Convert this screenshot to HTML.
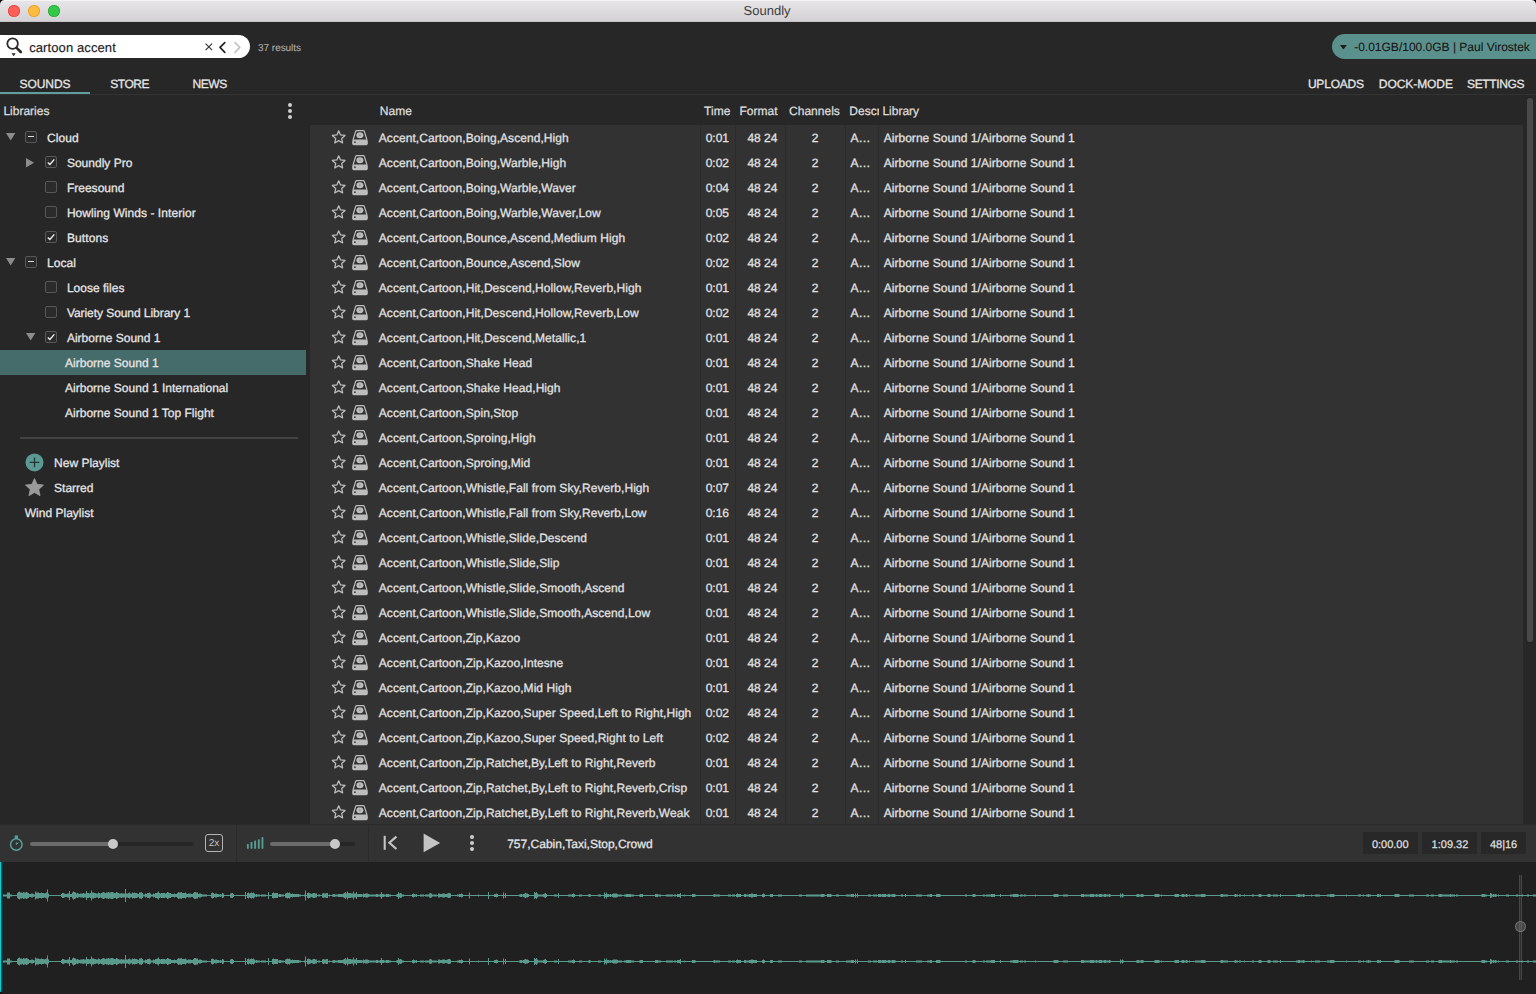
<!DOCTYPE html>
<html><head><meta charset="utf-8"><title>Soundly</title>
<style>
html,body{margin:0;padding:0}
body{width:1536px;height:994px;overflow:hidden;position:relative;background:#272727;font-family:"Liberation Sans", sans-serif;font-size:12px;color:#e2e2e2}
.t{position:absolute;white-space:nowrap;line-height:20px;height:20px;text-rendering:geometricPrecision;-webkit-text-stroke:0.28px currentColor}
.a{position:absolute}
.cb{position:absolute;width:10px;height:10px;border:1px solid #585858;border-radius:2px;background:#2b2b2b}
svg{position:absolute;overflow:visible}
</style></head><body>

<div class="a" style="left:0;top:0;width:1536px;height:22px;background:linear-gradient(#e9e7e9 0,#e6e4e6 2px,#d3d1d3 21px,#b8b6b8 22px);"></div>
<div class="a" style="left:0;top:0;width:1536px;height:1px;background:#f4f3f4"></div>
<div class="a" style="left:8px;top:5px;width:12px;height:12px;border-radius:50%;background:#fc5f57;box-shadow:inset 0 0 0 0.8px #e2463f"></div>
<div class="a" style="left:28px;top:5px;width:12px;height:12px;border-radius:50%;background:#fdbc40;box-shadow:inset 0 0 0 0.8px #e0a028"></div>
<div class="a" style="left:48px;top:5px;width:12px;height:12px;border-radius:50%;background:#34c84a;box-shadow:inset 0 0 0 0.8px #27aa35"></div>
<div class="t" style="left:743.6px;top:1.10px;font-size:13px;color:#3c3c3c;-webkit-text-stroke:0">Soundly</div>
<div class="a" style="left:-12px;top:35px;width:262px;height:23px;border-radius:11.5px;background:#fff"></div>
<svg style="left:0;top:35px" width="30" height="23" viewBox="0 35 30 23">
<circle cx="12.6" cy="43.6" r="5.3" fill="none" stroke="#2a2a2a" stroke-width="1.8"/>
<path d="M16.6 47.8 L20.8 52" stroke="#2a2a2a" stroke-width="2.6" stroke-linecap="round"/>
<path d="M11.5 53.2 h4.2 l-2.1 3z" fill="#2a2a2a"/></svg>
<div class="t" style="left:29.2px;top:38.30px;font-size:13px;color:#1c1c1c;letter-spacing:0.1px;-webkit-text-stroke:0.15px">cartoon accent</div>
<svg style="left:200px;top:35px" width="50" height="23" viewBox="200 35 50 23">
<path d="M205.6 43.7 l6.5 6.5 M212.1 43.7 l-6.5 6.5" stroke="#333" stroke-width="1.1" fill="none"/>
<path d="M224.8 42.6 L220 47.4 L224.8 52.4" stroke="#222" stroke-width="1.7" fill="none" stroke-linecap="round" stroke-linejoin="round"/>
<path d="M235 42.6 L239.8 47.4 L235 52.4" stroke="#c4c4c4" stroke-width="1.7" fill="none" stroke-linecap="round" stroke-linejoin="round"/>
</svg>
<div class="t" style="left:258.1px;top:38.94px;font-size:10px;color:#adadad;letter-spacing:-0.05px;-webkit-text-stroke:0.1px">37 results</div>
<div class="a" style="left:1332px;top:34px;width:230px;height:25px;border-radius:12.5px;background:#5b918d"></div>
<svg style="left:1338px;top:42px" width="12" height="10" viewBox="1338 42 12 10"><path d="M1340 45 h6.8 l-3.4 4.4z" fill="#1c1c1c"/></svg>
<div class="t" style="left:1354.2px;top:36.64px;font-size:12px;color:#161616;-webkit-text-stroke:0.1px">-0.01GB/100.0GB | Paul Virostek</div>
<div class="t" style="left:19.6px;top:73.84px;font-size:12px;color:#e6e6e6;letter-spacing:-0.08px">SOUNDS</div>
<div class="t" style="left:110.2px;top:73.84px;font-size:12px;color:#e6e6e6;letter-spacing:-0.45px">STORE</div>
<div class="t" style="left:192.5px;top:73.84px;font-size:12px;color:#e6e6e6;letter-spacing:-0.4px">NEWS</div>
<div class="t" style="left:1307.9px;top:73.64px;font-size:12px;color:#e6e6e6;letter-spacing:-0.2px">UPLOADS</div>
<div class="t" style="left:1378.8px;top:73.64px;font-size:12px;color:#e6e6e6;letter-spacing:-0.06px">DOCK-MODE</div>
<div class="t" style="left:1467px;top:73.64px;font-size:12px;color:#e6e6e6;letter-spacing:-0.35px">SETTINGS</div>
<div class="a" style="left:0;top:94px;width:1536px;height:1px;background:#333"></div>
<div class="a" style="left:0;top:92px;width:90px;height:2px;background:#5f9fa0"></div>
<div class="t" style="left:3.4px;top:100.54px;font-size:12px;color:#dcdcdc;">Libraries</div>
<div class="a" style="left:288.4px;top:102.6px;width:4px;height:4px;border-radius:50%;background:#cfcfcf"></div>
<div class="a" style="left:288.4px;top:108.5px;width:4px;height:4px;border-radius:50%;background:#cfcfcf"></div>
<div class="a" style="left:288.4px;top:114.5px;width:4px;height:4px;border-radius:50%;background:#cfcfcf"></div>
<div class="t" style="left:379.8px;top:100.54px;font-size:12px;color:#dcdcdc;">Name</div>
<div class="t" style="left:704.1px;top:100.54px;font-size:12px;color:#dcdcdc;">Time</div>
<div class="t" style="left:739.5px;top:100.54px;font-size:12px;color:#dcdcdc;">Format</div>
<div class="t" style="left:789.1px;top:100.54px;font-size:12px;color:#dcdcdc;">Channels</div>
<div class="t" style="left:849.3px;top:100.54px;font-size:12px;color:#dcdcdc;width:29.6px;overflow:hidden">Descr</div>
<div class="t" style="left:882.4px;top:100.54px;font-size:12px;color:#dcdcdc;">Library</div>
<div class="a" style="left:0;top:350px;width:306px;height:25px;background:#466b6b"></div>
<svg style="left:5.7px;top:133.2px" width="10" height="8"><path d="M0 0 h9.4 l-4.7 7.5z" fill="#8c8c8c"/></svg>
<div class="cb" style="left:25px;top:131px"></div>
<div class="a" style="left:27.8px;top:136.4px;width:6.4px;height:1px;background:#dcdcdc"></div>
<div class="t" style="left:47.1px;top:127.54px;font-size:12px;color:#e6e6e6;letter-spacing:0.04px">Cloud</div>
<svg style="left:25.8px;top:157.9px" width="9" height="10"><path d="M0 0 v9.4 l8.1 -4.7z" fill="#8c8c8c"/></svg>
<div class="cb" style="left:45px;top:156px"></div>
<svg style="left:45px;top:156px" width="12" height="12"><path d="M2.8 6.4 L4.9 8.5 L9.3 3.4" stroke="#f0f0f0" stroke-width="1.4" fill="none"/></svg>
<div class="t" style="left:66.9px;top:152.54px;font-size:12px;color:#e6e6e6;letter-spacing:0.015px">Soundly Pro</div>
<div class="cb" style="left:45px;top:181px"></div>
<div class="t" style="left:66.9px;top:177.54px;font-size:12px;color:#e6e6e6;letter-spacing:0.015px">Freesound</div>
<div class="cb" style="left:45px;top:206px"></div>
<div class="t" style="left:66.9px;top:202.54px;font-size:12px;color:#e6e6e6;letter-spacing:0.06px">Howling Winds - Interior</div>
<div class="cb" style="left:45px;top:231px"></div>
<svg style="left:45px;top:231px" width="12" height="12"><path d="M2.8 6.4 L4.9 8.5 L9.3 3.4" stroke="#f0f0f0" stroke-width="1.4" fill="none"/></svg>
<div class="t" style="left:66.9px;top:227.54px;font-size:12px;color:#e6e6e6;letter-spacing:0.12px">Buttons</div>
<svg style="left:5.7px;top:258.2px" width="10" height="8"><path d="M0 0 h9.4 l-4.7 7.5z" fill="#8c8c8c"/></svg>
<div class="cb" style="left:25px;top:256px"></div>
<div class="a" style="left:27.8px;top:261.4px;width:6.4px;height:1px;background:#dcdcdc"></div>
<div class="t" style="left:47.1px;top:252.54px;font-size:12px;color:#e6e6e6;letter-spacing:0.04px">Local</div>
<div class="cb" style="left:45px;top:281px"></div>
<div class="t" style="left:66.9px;top:277.54px;font-size:12px;color:#e6e6e6;letter-spacing:0.015px">Loose files</div>
<div class="cb" style="left:45px;top:306px"></div>
<div class="t" style="left:66.9px;top:302.54px;font-size:12px;color:#e6e6e6;letter-spacing:-0.06px">Variety Sound Library 1</div>
<svg style="left:25.8px;top:333.2px" width="10" height="8"><path d="M0 0 h9.4 l-4.7 7.5z" fill="#8c8c8c"/></svg>
<div class="cb" style="left:45px;top:331px"></div>
<svg style="left:45px;top:331px" width="12" height="12"><path d="M2.8 6.4 L4.9 8.5 L9.3 3.4" stroke="#f0f0f0" stroke-width="1.4" fill="none"/></svg>
<div class="t" style="left:66.9px;top:327.54px;font-size:12px;color:#e6e6e6;letter-spacing:0.015px">Airborne Sound 1</div>
<div class="t" style="left:65px;top:352.54px;font-size:12px;color:#e6e6e6;letter-spacing:0.015px">Airborne Sound 1</div>
<div class="t" style="left:65px;top:377.54px;font-size:12px;color:#e6e6e6;letter-spacing:0.015px">Airborne Sound 1 International</div>
<div class="t" style="left:65px;top:402.54px;font-size:12px;color:#e6e6e6;letter-spacing:0.015px">Airborne Sound 1 Top Flight</div>
<div class="a" style="left:20px;top:437px;width:278px;height:2px;background:#434343"></div>
<svg style="left:25px;top:453px" width="19" height="19"><circle cx="9.5" cy="9.4" r="9" fill="#5b9a94"/><path d="M9.5 4.6 v9.6 M4.7 9.4 h9.6" stroke="#243534" stroke-width="1.3"/></svg>
<div class="t" style="left:54.1px;top:452.54px;font-size:12px;color:#e6e6e6;">New Playlist</div>
<svg style="left:24px;top:477px" width="21" height="21"><path d="M10.50 1.50 L13.15 7.36 L19.54 8.06 L14.78 12.39 L16.08 18.69 L10.50 15.50 L4.92 18.69 L6.22 12.39 L1.46 8.06 L7.85 7.36Z" fill="#9a9a9a" stroke="#9a9a9a" stroke-width="0.8" stroke-linejoin="round"/></svg>
<div class="t" style="left:54.1px;top:477.54px;font-size:12px;color:#e6e6e6;">Starred</div>
<div class="t" style="left:24.8px;top:502.54px;font-size:12px;color:#e6e6e6;">Wind Playlist</div>
<div class="a" style="left:310px;top:125px;width:1213px;height:700px;background:#323232"></div>
<div class="a" style="left:700px;top:125px;width:1px;height:700px;background:#2b2b2b"></div>
<div class="a" style="left:735px;top:125px;width:1px;height:700px;background:#2b2b2b"></div>
<div class="a" style="left:785px;top:125px;width:1px;height:700px;background:#2b2b2b"></div>
<div class="a" style="left:845px;top:125px;width:1px;height:700px;background:#2b2b2b"></div>
<div class="a" style="left:878px;top:125px;width:1px;height:700px;background:#2b2b2b"></div>
<svg width="0" height="0" style="left:0;top:0"><defs><g id="st"><path d="M6.70 0.80 L8.52 4.99 L13.07 5.43 L9.65 8.46 L10.64 12.92 L6.70 10.60 L2.76 12.92 L3.75 8.46 L0.33 5.43 L4.88 4.99Z" fill="none" stroke="#bdbdbd" stroke-width="1.25" stroke-linejoin="round"/></g><g id="dk"><path d="M1 10 L3.6 1.6 Q3.9 0.7 4.8 0.7 H11.2 Q12.1 0.7 12.4 1.6 L15 10" fill="none" stroke="#bdbdbd" stroke-width="1.2"/><rect x="0.2" y="9.4" width="15.6" height="5.8" rx="1.6" fill="#bdbdbd"/><ellipse cx="7.9" cy="5.3" rx="3.5" ry="3" fill="#bdbdbd"/><ellipse cx="7.9" cy="5.2" rx="0.55" ry="0.9" fill="#777"/><circle cx="2.9" cy="12.2" r="0.85" fill="#333"/></g></defs></svg>
<div class="a" style="left:310px;top:125px;width:1213px;height:700px;overflow:hidden">
<svg style="left:22px;top:5px" width="14" height="15"><use href="#st"/></svg>
<svg style="left:41.7px;top:4.6px" width="16" height="16"><use href="#dk"/></svg>
<div class="t" style="left:68.8px;top:2.59px;letter-spacing:0.055px">Accent,Cartoon,Boing,Ascend,High</div>
<div class="t" style="left:395.7px;top:2.59px;letter-spacing:0px">0:01</div>
<div class="t" style="left:437.4px;top:2.59px;letter-spacing:0px">48 24</div>
<div class="t" style="left:501.8px;top:2.59px;letter-spacing:0px">2</div>
<div class="t" style="left:540.6px;top:2.59px;letter-spacing:0px">A&hellip;</div>
<div class="t" style="left:573.7px;top:2.59px;letter-spacing:0.03px">Airborne Sound 1/Airborne Sound 1</div>
<svg style="left:22px;top:30px" width="14" height="15"><use href="#st"/></svg>
<svg style="left:41.7px;top:29.6px" width="16" height="16"><use href="#dk"/></svg>
<div class="t" style="left:68.8px;top:27.59px;letter-spacing:0.055px">Accent,Cartoon,Boing,Warble,High</div>
<div class="t" style="left:395.7px;top:27.59px;letter-spacing:0px">0:02</div>
<div class="t" style="left:437.4px;top:27.59px;letter-spacing:0px">48 24</div>
<div class="t" style="left:501.8px;top:27.59px;letter-spacing:0px">2</div>
<div class="t" style="left:540.6px;top:27.59px;letter-spacing:0px">A&hellip;</div>
<div class="t" style="left:573.7px;top:27.59px;letter-spacing:0.03px">Airborne Sound 1/Airborne Sound 1</div>
<svg style="left:22px;top:55px" width="14" height="15"><use href="#st"/></svg>
<svg style="left:41.7px;top:54.6px" width="16" height="16"><use href="#dk"/></svg>
<div class="t" style="left:68.8px;top:52.59px;letter-spacing:0.055px">Accent,Cartoon,Boing,Warble,Waver</div>
<div class="t" style="left:395.7px;top:52.59px;letter-spacing:0px">0:04</div>
<div class="t" style="left:437.4px;top:52.59px;letter-spacing:0px">48 24</div>
<div class="t" style="left:501.8px;top:52.59px;letter-spacing:0px">2</div>
<div class="t" style="left:540.6px;top:52.59px;letter-spacing:0px">A&hellip;</div>
<div class="t" style="left:573.7px;top:52.59px;letter-spacing:0.03px">Airborne Sound 1/Airborne Sound 1</div>
<svg style="left:22px;top:80px" width="14" height="15"><use href="#st"/></svg>
<svg style="left:41.7px;top:79.6px" width="16" height="16"><use href="#dk"/></svg>
<div class="t" style="left:68.8px;top:77.59px;letter-spacing:0.055px">Accent,Cartoon,Boing,Warble,Waver,Low</div>
<div class="t" style="left:395.7px;top:77.59px;letter-spacing:0px">0:05</div>
<div class="t" style="left:437.4px;top:77.59px;letter-spacing:0px">48 24</div>
<div class="t" style="left:501.8px;top:77.59px;letter-spacing:0px">2</div>
<div class="t" style="left:540.6px;top:77.59px;letter-spacing:0px">A&hellip;</div>
<div class="t" style="left:573.7px;top:77.59px;letter-spacing:0.03px">Airborne Sound 1/Airborne Sound 1</div>
<svg style="left:22px;top:105px" width="14" height="15"><use href="#st"/></svg>
<svg style="left:41.7px;top:104.6px" width="16" height="16"><use href="#dk"/></svg>
<div class="t" style="left:68.8px;top:102.59px;letter-spacing:0.055px">Accent,Cartoon,Bounce,Ascend,Medium High</div>
<div class="t" style="left:395.7px;top:102.59px;letter-spacing:0px">0:02</div>
<div class="t" style="left:437.4px;top:102.59px;letter-spacing:0px">48 24</div>
<div class="t" style="left:501.8px;top:102.59px;letter-spacing:0px">2</div>
<div class="t" style="left:540.6px;top:102.59px;letter-spacing:0px">A&hellip;</div>
<div class="t" style="left:573.7px;top:102.59px;letter-spacing:0.03px">Airborne Sound 1/Airborne Sound 1</div>
<svg style="left:22px;top:130px" width="14" height="15"><use href="#st"/></svg>
<svg style="left:41.7px;top:129.6px" width="16" height="16"><use href="#dk"/></svg>
<div class="t" style="left:68.8px;top:127.59px;letter-spacing:0.055px">Accent,Cartoon,Bounce,Ascend,Slow</div>
<div class="t" style="left:395.7px;top:127.59px;letter-spacing:0px">0:02</div>
<div class="t" style="left:437.4px;top:127.59px;letter-spacing:0px">48 24</div>
<div class="t" style="left:501.8px;top:127.59px;letter-spacing:0px">2</div>
<div class="t" style="left:540.6px;top:127.59px;letter-spacing:0px">A&hellip;</div>
<div class="t" style="left:573.7px;top:127.59px;letter-spacing:0.03px">Airborne Sound 1/Airborne Sound 1</div>
<svg style="left:22px;top:155px" width="14" height="15"><use href="#st"/></svg>
<svg style="left:41.7px;top:154.6px" width="16" height="16"><use href="#dk"/></svg>
<div class="t" style="left:68.8px;top:152.59px;letter-spacing:0.055px">Accent,Cartoon,Hit,Descend,Hollow,Reverb,High</div>
<div class="t" style="left:395.7px;top:152.59px;letter-spacing:0px">0:01</div>
<div class="t" style="left:437.4px;top:152.59px;letter-spacing:0px">48 24</div>
<div class="t" style="left:501.8px;top:152.59px;letter-spacing:0px">2</div>
<div class="t" style="left:540.6px;top:152.59px;letter-spacing:0px">A&hellip;</div>
<div class="t" style="left:573.7px;top:152.59px;letter-spacing:0.03px">Airborne Sound 1/Airborne Sound 1</div>
<svg style="left:22px;top:180px" width="14" height="15"><use href="#st"/></svg>
<svg style="left:41.7px;top:179.6px" width="16" height="16"><use href="#dk"/></svg>
<div class="t" style="left:68.8px;top:177.59px;letter-spacing:0.055px">Accent,Cartoon,Hit,Descend,Hollow,Reverb,Low</div>
<div class="t" style="left:395.7px;top:177.59px;letter-spacing:0px">0:02</div>
<div class="t" style="left:437.4px;top:177.59px;letter-spacing:0px">48 24</div>
<div class="t" style="left:501.8px;top:177.59px;letter-spacing:0px">2</div>
<div class="t" style="left:540.6px;top:177.59px;letter-spacing:0px">A&hellip;</div>
<div class="t" style="left:573.7px;top:177.59px;letter-spacing:0.03px">Airborne Sound 1/Airborne Sound 1</div>
<svg style="left:22px;top:205px" width="14" height="15"><use href="#st"/></svg>
<svg style="left:41.7px;top:204.6px" width="16" height="16"><use href="#dk"/></svg>
<div class="t" style="left:68.8px;top:202.59px;letter-spacing:0.055px">Accent,Cartoon,Hit,Descend,Metallic,1</div>
<div class="t" style="left:395.7px;top:202.59px;letter-spacing:0px">0:01</div>
<div class="t" style="left:437.4px;top:202.59px;letter-spacing:0px">48 24</div>
<div class="t" style="left:501.8px;top:202.59px;letter-spacing:0px">2</div>
<div class="t" style="left:540.6px;top:202.59px;letter-spacing:0px">A&hellip;</div>
<div class="t" style="left:573.7px;top:202.59px;letter-spacing:0.03px">Airborne Sound 1/Airborne Sound 1</div>
<svg style="left:22px;top:230px" width="14" height="15"><use href="#st"/></svg>
<svg style="left:41.7px;top:229.6px" width="16" height="16"><use href="#dk"/></svg>
<div class="t" style="left:68.8px;top:227.59px;letter-spacing:0.055px">Accent,Cartoon,Shake Head</div>
<div class="t" style="left:395.7px;top:227.59px;letter-spacing:0px">0:01</div>
<div class="t" style="left:437.4px;top:227.59px;letter-spacing:0px">48 24</div>
<div class="t" style="left:501.8px;top:227.59px;letter-spacing:0px">2</div>
<div class="t" style="left:540.6px;top:227.59px;letter-spacing:0px">A&hellip;</div>
<div class="t" style="left:573.7px;top:227.59px;letter-spacing:0.03px">Airborne Sound 1/Airborne Sound 1</div>
<svg style="left:22px;top:255px" width="14" height="15"><use href="#st"/></svg>
<svg style="left:41.7px;top:254.6px" width="16" height="16"><use href="#dk"/></svg>
<div class="t" style="left:68.8px;top:252.59px;letter-spacing:0.055px">Accent,Cartoon,Shake Head,High</div>
<div class="t" style="left:395.7px;top:252.59px;letter-spacing:0px">0:01</div>
<div class="t" style="left:437.4px;top:252.59px;letter-spacing:0px">48 24</div>
<div class="t" style="left:501.8px;top:252.59px;letter-spacing:0px">2</div>
<div class="t" style="left:540.6px;top:252.59px;letter-spacing:0px">A&hellip;</div>
<div class="t" style="left:573.7px;top:252.59px;letter-spacing:0.03px">Airborne Sound 1/Airborne Sound 1</div>
<svg style="left:22px;top:280px" width="14" height="15"><use href="#st"/></svg>
<svg style="left:41.7px;top:279.6px" width="16" height="16"><use href="#dk"/></svg>
<div class="t" style="left:68.8px;top:277.59px;letter-spacing:0.055px">Accent,Cartoon,Spin,Stop</div>
<div class="t" style="left:395.7px;top:277.59px;letter-spacing:0px">0:01</div>
<div class="t" style="left:437.4px;top:277.59px;letter-spacing:0px">48 24</div>
<div class="t" style="left:501.8px;top:277.59px;letter-spacing:0px">2</div>
<div class="t" style="left:540.6px;top:277.59px;letter-spacing:0px">A&hellip;</div>
<div class="t" style="left:573.7px;top:277.59px;letter-spacing:0.03px">Airborne Sound 1/Airborne Sound 1</div>
<svg style="left:22px;top:305px" width="14" height="15"><use href="#st"/></svg>
<svg style="left:41.7px;top:304.6px" width="16" height="16"><use href="#dk"/></svg>
<div class="t" style="left:68.8px;top:302.59px;letter-spacing:0.055px">Accent,Cartoon,Sproing,High</div>
<div class="t" style="left:395.7px;top:302.59px;letter-spacing:0px">0:01</div>
<div class="t" style="left:437.4px;top:302.59px;letter-spacing:0px">48 24</div>
<div class="t" style="left:501.8px;top:302.59px;letter-spacing:0px">2</div>
<div class="t" style="left:540.6px;top:302.59px;letter-spacing:0px">A&hellip;</div>
<div class="t" style="left:573.7px;top:302.59px;letter-spacing:0.03px">Airborne Sound 1/Airborne Sound 1</div>
<svg style="left:22px;top:330px" width="14" height="15"><use href="#st"/></svg>
<svg style="left:41.7px;top:329.6px" width="16" height="16"><use href="#dk"/></svg>
<div class="t" style="left:68.8px;top:327.59px;letter-spacing:0.055px">Accent,Cartoon,Sproing,Mid</div>
<div class="t" style="left:395.7px;top:327.59px;letter-spacing:0px">0:01</div>
<div class="t" style="left:437.4px;top:327.59px;letter-spacing:0px">48 24</div>
<div class="t" style="left:501.8px;top:327.59px;letter-spacing:0px">2</div>
<div class="t" style="left:540.6px;top:327.59px;letter-spacing:0px">A&hellip;</div>
<div class="t" style="left:573.7px;top:327.59px;letter-spacing:0.03px">Airborne Sound 1/Airborne Sound 1</div>
<svg style="left:22px;top:355px" width="14" height="15"><use href="#st"/></svg>
<svg style="left:41.7px;top:354.6px" width="16" height="16"><use href="#dk"/></svg>
<div class="t" style="left:68.8px;top:352.59px;letter-spacing:0.055px">Accent,Cartoon,Whistle,Fall from Sky,Reverb,High</div>
<div class="t" style="left:395.7px;top:352.59px;letter-spacing:0px">0:07</div>
<div class="t" style="left:437.4px;top:352.59px;letter-spacing:0px">48 24</div>
<div class="t" style="left:501.8px;top:352.59px;letter-spacing:0px">2</div>
<div class="t" style="left:540.6px;top:352.59px;letter-spacing:0px">A&hellip;</div>
<div class="t" style="left:573.7px;top:352.59px;letter-spacing:0.03px">Airborne Sound 1/Airborne Sound 1</div>
<svg style="left:22px;top:380px" width="14" height="15"><use href="#st"/></svg>
<svg style="left:41.7px;top:379.6px" width="16" height="16"><use href="#dk"/></svg>
<div class="t" style="left:68.8px;top:377.59px;letter-spacing:0.055px">Accent,Cartoon,Whistle,Fall from Sky,Reverb,Low</div>
<div class="t" style="left:395.7px;top:377.59px;letter-spacing:0px">0:16</div>
<div class="t" style="left:437.4px;top:377.59px;letter-spacing:0px">48 24</div>
<div class="t" style="left:501.8px;top:377.59px;letter-spacing:0px">2</div>
<div class="t" style="left:540.6px;top:377.59px;letter-spacing:0px">A&hellip;</div>
<div class="t" style="left:573.7px;top:377.59px;letter-spacing:0.03px">Airborne Sound 1/Airborne Sound 1</div>
<svg style="left:22px;top:405px" width="14" height="15"><use href="#st"/></svg>
<svg style="left:41.7px;top:404.6px" width="16" height="16"><use href="#dk"/></svg>
<div class="t" style="left:68.8px;top:402.59px;letter-spacing:0.055px">Accent,Cartoon,Whistle,Slide,Descend</div>
<div class="t" style="left:395.7px;top:402.59px;letter-spacing:0px">0:01</div>
<div class="t" style="left:437.4px;top:402.59px;letter-spacing:0px">48 24</div>
<div class="t" style="left:501.8px;top:402.59px;letter-spacing:0px">2</div>
<div class="t" style="left:540.6px;top:402.59px;letter-spacing:0px">A&hellip;</div>
<div class="t" style="left:573.7px;top:402.59px;letter-spacing:0.03px">Airborne Sound 1/Airborne Sound 1</div>
<svg style="left:22px;top:430px" width="14" height="15"><use href="#st"/></svg>
<svg style="left:41.7px;top:429.6px" width="16" height="16"><use href="#dk"/></svg>
<div class="t" style="left:68.8px;top:427.59px;letter-spacing:0.055px">Accent,Cartoon,Whistle,Slide,Slip</div>
<div class="t" style="left:395.7px;top:427.59px;letter-spacing:0px">0:01</div>
<div class="t" style="left:437.4px;top:427.59px;letter-spacing:0px">48 24</div>
<div class="t" style="left:501.8px;top:427.59px;letter-spacing:0px">2</div>
<div class="t" style="left:540.6px;top:427.59px;letter-spacing:0px">A&hellip;</div>
<div class="t" style="left:573.7px;top:427.59px;letter-spacing:0.03px">Airborne Sound 1/Airborne Sound 1</div>
<svg style="left:22px;top:455px" width="14" height="15"><use href="#st"/></svg>
<svg style="left:41.7px;top:454.6px" width="16" height="16"><use href="#dk"/></svg>
<div class="t" style="left:68.8px;top:452.59px;letter-spacing:0.055px">Accent,Cartoon,Whistle,Slide,Smooth,Ascend</div>
<div class="t" style="left:395.7px;top:452.59px;letter-spacing:0px">0:01</div>
<div class="t" style="left:437.4px;top:452.59px;letter-spacing:0px">48 24</div>
<div class="t" style="left:501.8px;top:452.59px;letter-spacing:0px">2</div>
<div class="t" style="left:540.6px;top:452.59px;letter-spacing:0px">A&hellip;</div>
<div class="t" style="left:573.7px;top:452.59px;letter-spacing:0.03px">Airborne Sound 1/Airborne Sound 1</div>
<svg style="left:22px;top:480px" width="14" height="15"><use href="#st"/></svg>
<svg style="left:41.7px;top:479.6px" width="16" height="16"><use href="#dk"/></svg>
<div class="t" style="left:68.8px;top:477.59px;letter-spacing:0.055px">Accent,Cartoon,Whistle,Slide,Smooth,Ascend,Low</div>
<div class="t" style="left:395.7px;top:477.59px;letter-spacing:0px">0:01</div>
<div class="t" style="left:437.4px;top:477.59px;letter-spacing:0px">48 24</div>
<div class="t" style="left:501.8px;top:477.59px;letter-spacing:0px">2</div>
<div class="t" style="left:540.6px;top:477.59px;letter-spacing:0px">A&hellip;</div>
<div class="t" style="left:573.7px;top:477.59px;letter-spacing:0.03px">Airborne Sound 1/Airborne Sound 1</div>
<svg style="left:22px;top:505px" width="14" height="15"><use href="#st"/></svg>
<svg style="left:41.7px;top:504.6px" width="16" height="16"><use href="#dk"/></svg>
<div class="t" style="left:68.8px;top:502.59px;letter-spacing:0.055px">Accent,Cartoon,Zip,Kazoo</div>
<div class="t" style="left:395.7px;top:502.59px;letter-spacing:0px">0:01</div>
<div class="t" style="left:437.4px;top:502.59px;letter-spacing:0px">48 24</div>
<div class="t" style="left:501.8px;top:502.59px;letter-spacing:0px">2</div>
<div class="t" style="left:540.6px;top:502.59px;letter-spacing:0px">A&hellip;</div>
<div class="t" style="left:573.7px;top:502.59px;letter-spacing:0.03px">Airborne Sound 1/Airborne Sound 1</div>
<svg style="left:22px;top:530px" width="14" height="15"><use href="#st"/></svg>
<svg style="left:41.7px;top:529.6px" width="16" height="16"><use href="#dk"/></svg>
<div class="t" style="left:68.8px;top:527.59px;letter-spacing:0.055px">Accent,Cartoon,Zip,Kazoo,Intesne</div>
<div class="t" style="left:395.7px;top:527.59px;letter-spacing:0px">0:01</div>
<div class="t" style="left:437.4px;top:527.59px;letter-spacing:0px">48 24</div>
<div class="t" style="left:501.8px;top:527.59px;letter-spacing:0px">2</div>
<div class="t" style="left:540.6px;top:527.59px;letter-spacing:0px">A&hellip;</div>
<div class="t" style="left:573.7px;top:527.59px;letter-spacing:0.03px">Airborne Sound 1/Airborne Sound 1</div>
<svg style="left:22px;top:555px" width="14" height="15"><use href="#st"/></svg>
<svg style="left:41.7px;top:554.6px" width="16" height="16"><use href="#dk"/></svg>
<div class="t" style="left:68.8px;top:552.59px;letter-spacing:0.055px">Accent,Cartoon,Zip,Kazoo,Mid High</div>
<div class="t" style="left:395.7px;top:552.59px;letter-spacing:0px">0:01</div>
<div class="t" style="left:437.4px;top:552.59px;letter-spacing:0px">48 24</div>
<div class="t" style="left:501.8px;top:552.59px;letter-spacing:0px">2</div>
<div class="t" style="left:540.6px;top:552.59px;letter-spacing:0px">A&hellip;</div>
<div class="t" style="left:573.7px;top:552.59px;letter-spacing:0.03px">Airborne Sound 1/Airborne Sound 1</div>
<svg style="left:22px;top:580px" width="14" height="15"><use href="#st"/></svg>
<svg style="left:41.7px;top:579.6px" width="16" height="16"><use href="#dk"/></svg>
<div class="t" style="left:68.8px;top:577.59px;letter-spacing:0.055px">Accent,Cartoon,Zip,Kazoo,Super Speed,Left to Right,High</div>
<div class="t" style="left:395.7px;top:577.59px;letter-spacing:0px">0:02</div>
<div class="t" style="left:437.4px;top:577.59px;letter-spacing:0px">48 24</div>
<div class="t" style="left:501.8px;top:577.59px;letter-spacing:0px">2</div>
<div class="t" style="left:540.6px;top:577.59px;letter-spacing:0px">A&hellip;</div>
<div class="t" style="left:573.7px;top:577.59px;letter-spacing:0.03px">Airborne Sound 1/Airborne Sound 1</div>
<svg style="left:22px;top:605px" width="14" height="15"><use href="#st"/></svg>
<svg style="left:41.7px;top:604.6px" width="16" height="16"><use href="#dk"/></svg>
<div class="t" style="left:68.8px;top:602.59px;letter-spacing:0.055px">Accent,Cartoon,Zip,Kazoo,Super Speed,Right to Left</div>
<div class="t" style="left:395.7px;top:602.59px;letter-spacing:0px">0:02</div>
<div class="t" style="left:437.4px;top:602.59px;letter-spacing:0px">48 24</div>
<div class="t" style="left:501.8px;top:602.59px;letter-spacing:0px">2</div>
<div class="t" style="left:540.6px;top:602.59px;letter-spacing:0px">A&hellip;</div>
<div class="t" style="left:573.7px;top:602.59px;letter-spacing:0.03px">Airborne Sound 1/Airborne Sound 1</div>
<svg style="left:22px;top:630px" width="14" height="15"><use href="#st"/></svg>
<svg style="left:41.7px;top:629.6px" width="16" height="16"><use href="#dk"/></svg>
<div class="t" style="left:68.8px;top:627.59px;letter-spacing:0.055px">Accent,Cartoon,Zip,Ratchet,By,Left to Right,Reverb</div>
<div class="t" style="left:395.7px;top:627.59px;letter-spacing:0px">0:01</div>
<div class="t" style="left:437.4px;top:627.59px;letter-spacing:0px">48 24</div>
<div class="t" style="left:501.8px;top:627.59px;letter-spacing:0px">2</div>
<div class="t" style="left:540.6px;top:627.59px;letter-spacing:0px">A&hellip;</div>
<div class="t" style="left:573.7px;top:627.59px;letter-spacing:0.03px">Airborne Sound 1/Airborne Sound 1</div>
<svg style="left:22px;top:655px" width="14" height="15"><use href="#st"/></svg>
<svg style="left:41.7px;top:654.6px" width="16" height="16"><use href="#dk"/></svg>
<div class="t" style="left:68.8px;top:652.59px;letter-spacing:0.055px">Accent,Cartoon,Zip,Ratchet,By,Left to Right,Reverb,Crisp</div>
<div class="t" style="left:395.7px;top:652.59px;letter-spacing:0px">0:01</div>
<div class="t" style="left:437.4px;top:652.59px;letter-spacing:0px">48 24</div>
<div class="t" style="left:501.8px;top:652.59px;letter-spacing:0px">2</div>
<div class="t" style="left:540.6px;top:652.59px;letter-spacing:0px">A&hellip;</div>
<div class="t" style="left:573.7px;top:652.59px;letter-spacing:0.03px">Airborne Sound 1/Airborne Sound 1</div>
<svg style="left:22px;top:680px" width="14" height="15"><use href="#st"/></svg>
<svg style="left:41.7px;top:679.6px" width="16" height="16"><use href="#dk"/></svg>
<div class="t" style="left:68.8px;top:677.59px;letter-spacing:0.055px">Accent,Cartoon,Zip,Ratchet,By,Left to Right,Reverb,Weak</div>
<div class="t" style="left:395.7px;top:677.59px;letter-spacing:0px">0:01</div>
<div class="t" style="left:437.4px;top:677.59px;letter-spacing:0px">48 24</div>
<div class="t" style="left:501.8px;top:677.59px;letter-spacing:0px">2</div>
<div class="t" style="left:540.6px;top:677.59px;letter-spacing:0px">A&hellip;</div>
<div class="t" style="left:573.7px;top:677.59px;letter-spacing:0.03px">Airborne Sound 1/Airborne Sound 1</div>
</div>
<div class="a" style="left:1527px;top:98px;width:6px;height:544px;border-radius:3px;background:#4a4a4a"></div>
<div class="a" style="left:0;top:824px;width:1536px;height:1px;background:#2a2a2a"></div>
<div class="a" style="left:0;top:825px;width:1536px;height:37px;background:#323232"></div>
<div class="a" style="left:235.5px;top:825px;width:1px;height:37px;background:#2b2b2b"></div>
<div class="a" style="left:368px;top:825px;width:1px;height:37px;background:#2b2b2b"></div>
<svg style="left:8px;top:834px" width="18" height="18"><circle cx="8.3" cy="10.5" r="5.75" fill="none" stroke="#55a398" stroke-width="1.5"/><rect x="6.7" y="1.5" width="3.3" height="3.2" fill="#55a398"/><path d="M8.3 8.2 V10.6 L10.6 8.6" stroke="#55a398" stroke-width="1" fill="none"/></svg>
<div class="a" style="left:30.2px;top:841.9px;width:164.3px;height:4px;border-radius:2px;background:#262626"></div>
<div class="a" style="left:30.2px;top:841.9px;width:82.6px;height:4px;border-radius:2px;background:#6c6c6c"></div>
<div class="a" style="left:107.8px;top:838.9px;width:10px;height:10px;border-radius:50%;background:#c9c9c9"></div>
<div class="a" style="left:205px;top:834px;width:16px;height:16px;border:1px solid #b5b5b5;border-radius:3px"></div>
<div class="t" style="left:208.7px;top:833.83px;font-size:10px;color:#c4c4c4;-webkit-text-stroke:0">2x</div>
<svg style="left:0;top:0" width="1" height="1"><rect x="246.90" y="844.00" width="1.9" height="4.8" rx="0.6" fill="#579c92"/><rect x="250.55" y="842.00" width="1.9" height="6.8" rx="0.6" fill="#579c92"/><rect x="254.20" y="840.50" width="1.9" height="8.3" rx="0.6" fill="#579c92"/><rect x="257.85" y="839.20" width="1.9" height="9.6" rx="0.6" fill="#579c92"/><rect x="261.50" y="837.10" width="1.9" height="11.7" rx="0.6" fill="#579c92"/></svg>
<div class="a" style="left:270.2px;top:841.9px;width:84.5px;height:4px;border-radius:2px;background:#262626"></div>
<div class="a" style="left:270.2px;top:841.9px;width:64.80000000000001px;height:4px;border-radius:2px;background:#6c6c6c"></div>
<div class="a" style="left:330px;top:838.9px;width:10px;height:10px;border-radius:50%;background:#c9c9c9"></div>
<svg style="left:0;top:0" width="1" height="1"><path d="M384.7 835.8 v14" stroke="#c4c4c4" stroke-width="2.1"/><path d="M396.4 836.6 L389.4 842.8 L396.4 849" stroke="#c4c4c4" stroke-width="2.2" fill="none"/><path d="M423.6 833.6 V852.2 L440.2 842.9Z" fill="#c4c4c4"/></svg>
<div class="a" style="left:470px;top:834.6px;width:4px;height:4px;border-radius:50%;background:#cfcfcf"></div>
<div class="a" style="left:470px;top:840.8px;width:4px;height:4px;border-radius:50%;background:#cfcfcf"></div>
<div class="a" style="left:470px;top:847px;width:4px;height:4px;border-radius:50%;background:#cfcfcf"></div>
<div class="t" style="left:507.2px;top:833.84px;font-size:12px;color:#e6e6e6;">757,Cabin,Taxi,Stop,Crowd</div>
<div class="a" style="left:1363px;top:832px;width:55px;height:22px;background:#282828"></div>
<div class="t" style="left:1371.9px;top:834.69px;font-size:11px;color:#dedede;">0:00.00</div>
<div class="a" style="left:1422px;top:832px;width:55px;height:22px;background:#282828"></div>
<div class="t" style="left:1431.6px;top:834.69px;font-size:11px;color:#dedede;">1:09.32</div>
<div class="a" style="left:1481px;top:832px;width:45px;height:22px;background:#282828"></div>
<div class="t" style="left:1489.9px;top:834.69px;font-size:11px;color:#dedede;">48|16</div>
<div class="a" style="left:0;top:862px;width:1536px;height:132px;background:#202020"></div>
<div class="a" style="left:0;top:862px;width:3px;height:130px;background:linear-gradient(to right,#00d6d6 0,#00d6d6 1.25px,#04454f 1.45px,#0b2c34 3px)"></div>
<svg style="left:0;top:0" width="1536" height="994" viewBox="0 0 1536 994"><path id="wv" d="M3 895.5H3V894.5H7V892.5H10V894.5H12V895.08H17V893H18V892H19V891.5H20V892.5H22V893H23V892H24V892.5H26V892H27V892.5H28V893H29V894H31V893.5H33V894H34V894.5H35V891.5H36V892.5H39V893H41V892.5H42V893H44V893.5H45V893H46V892.5H47V889.5H48V893.5H49V895.08H61V894H62V893H64V893.5H65V894H67V893.5H69V891H70V894H72V892.5H73V891.5H74V892H75V892.5H76V893.5H77V893H78V893.5H79V894H80V893.5H83V893H84V893.5H86V891H87V893H89V893.5H90V893H91V890.5H92V892.5H94V893H96V893.5H98V892.5H99V893H100V893.5H101V893H102V892.5H103V892H104V892.5H105V893H106V892.5H108V892H109V892.5H111V892H113V892.5H114V893H116V892H117V892.5H118V893H119V893.5H121V893H122V893.5H125V889H126V893.5H128V893H129V892.5H130V893.5H132V892.5H133V893H134V892.5H135V893H137V893.5H138V894H139V892.5H141V892H142V893H143V894.5H145V893.5H146V894H147V893H149V892.5H150V893.5H151V894.5H153V893.5H154V894H155V893H157V892.5H158V891.5H159V893H160V893.5H161V893H165V893.5H166V893H167V892H168V892.5H169V893H171V894H174V893.5H175V894H177V893H178V892H179V892.5H181V892H182V893H185V892.5H186V893.5H187V894H188V893.5H191V894H193V893H194V892H196V892.5H198V894H199V893.5H201V894H202V894.5H207V895.08H211V893H212V892.5H213V893H214V894H215V893.5H217V894H219V894.5H220V894H221V894.5H222V893H223V893.5H224V895.08H230V893.5H231V893H233V894H234V895.08H245V892H246V895.08H247V893H248V892.5H249V893.5H250V893H251V892.5H252V893H253V892.5H254V893.5H255V894.5H256V894H257V894.5H260V895.08H261V894.5H266V895.08H268V892H269V895.08H272V893H273V892.5H274V893H278V894.5H279V894H281V894.5H284V895.08H285V893.5H286V893H287V892.5H288V893H289V892.5H290V893.5H291V894H292V893.5H293V894H299V894.5H301V895.08H304V894.5H305V890.5H306V895.08H307V893H308V892.5H309V893H310V893.5H311V894H312V893.5H313V893H315V893.5H317V895.08H318V894.5H320V895.08H322V893.5H323V893H324V893.5H326V893H328V895.08H329V894.5H330V895.08H332V894.5H333V894H335V894.5H338V894H343V893.5H344V893H345V892H346V893.5H347V891.5H348V893H351V893.5H353V891.5H354V893.5H356V892H357V894H362V894.5H363V893.5H364V894H365V893.5H368V894H369V894.5H376V894H378V894.5H380V894H381V892H382V894H384V894.5H386V894H389V894.5H391V895.08H396V894.5H397V894H398V892H399V893.5H400V893H401V893.5H402V894.5H404V895.08H412V894H413V893.5H414V894H415V894.5H416V894H417V895.08H420V894.5H424V895.08H425V894.5H429V893.5H430V893H431V893.5H432V894.5H437V895.08H438V893.5H440V894H442V893.5H445V894H447V893.5H448V893H450V893.5H451V895.08H457V894.5H459V894H461V893.5H462V894H463V895.08H469V892.5H470V895.08H478V894.5H479V895.08H488V892H489V895.08H494V894H496V893.5H497V894H498V895.08H503V892.5H504V895.08H505V893H506V895.08H519V894.5H520V894H522V894.5H523V894H524V893.5H525V893H526V893.5H528V894H529V895.08H534V892H535V893H536V892H537V893.5H538V894.5H543V894H544V893.5H545V893H546V894H547V895.08H554V894.5H557V895.08H558V893H559V895.08H568V894.5H572V894H573V893.5H574V894H575V895.08H579V894.5H582V895.08H588V894.5H589V894H590V894.5H591V895.08H598V894.5H601V895.08H604V892.5H605V894H606V892.5H607V894H609V894.5H610V894H611V894.5H612V894H613V893.5H617V894H618V894.5H622V895.08H624V894.5H626V894H631V894.5H634V895.08H639V894.5H640V894H643V895.08H655V894H658V894.5H661V895.08H666V894.5H673V895.08H674V894.5H676V895.08H677V894H680V893H681V895.08H684V894.5H685V895.08H692V894H695V894.5H696V895.08H713V894.5H714V894H715V894.5H720V895.08H728V894.5H731V895.08H732V894.5H735V895.08H736V894H737V893.5H738V894H741V895.08H744V894H746V894.5H749V894H751V893.5H753V894H757V895.08H762V894H763V893.5H764V894H765V895.08H770V894H773V895.08H778V894.5H782V895.08H799V894.5H802V895.08H806V894.5H821V894H824V894.5H825V895.08H827V894H831V894.5H832V895.08H836V894.5H839V895.08H846V894.5H851V894H854V895.08H855V893.5H856V895.08H857V893.5H858V895.08H868V894.5H871V895.08H873V894.5H877V895.08H878V894H881V894.5H882V894H886V894.5H888V894H890V894.5H892V894H895V894.5H896V895.08H901V894.5H903V895.08H905V894H906V895.08H916V894.5H922V895.08H927V894.5H930V894H932V895.08H936V894H940V894.5H941V895.08H965V894.5H967V895.08H972V894.5H973V894H975V894.5H976V895.08H983V894.5H985V895.08H986V894.5H991V894H995V895.08H1000V894H1001V895.08H1010V894.5H1013V894H1018V894.5H1019V895.08H1020V894.5H1023V895.08H1024V894.5H1026V895.08H1035V894.5H1036V895.08H1053V894.5H1054V894H1058V894.5H1059V895.08H1063V894.5H1068V895.08H1081V894H1084V894.5H1090V894H1094V894.5H1096V894H1097V894.5H1099V894H1102V894.5H1104V894H1106V894.5H1109V894H1110V894.5H1111V895.08H1120V893.5H1121V894.5H1122V893.5H1123V894.5H1124V895.08H1136V894.5H1137V894H1139V894.5H1141V894H1143V894.5H1144V895.08H1154V894.5H1155V894H1159V894.5H1160V895.08H1161V894.5H1162V895.08H1174V894.5H1175V894H1179V895.08H1181V894.5H1182V894H1184V894.5H1186V894H1187V894.5H1188V895.08H1189V894.5H1190V895.08H1195V894.5H1201V894H1205V894.5H1206V895.08H1220V894.5H1221V894H1223V894.5H1228V895.08H1234V894.5H1235V894H1236V894.5H1238V895.08H1239V894.5H1241V895.08H1244V894.5H1245V895.08H1252V894.5H1254V895.08H1258V894.5H1259V894H1261V894.5H1262V895.08H1267V894.5H1268V894H1270V894.5H1271V895.08H1273V894.5H1278V895.08H1280V894H1281V895.08H1296V894.5H1298V894H1300V894.5H1303V894H1304V894.5H1305V895.08H1311V894.5H1312V895.08H1315V894.5H1320V895.08H1327V894.5H1330V894H1334V894.5H1335V895.08H1346V894.5H1347V895.08H1358V894.5H1361V895.08H1363V894.5H1364V895.08H1366V894.5H1368V894H1369V894.5H1371V895.08H1377V894H1379V894.5H1380V894H1381V895.08H1394V894.5H1395V894H1399V894.5H1400V895.08H1409V894.5H1414V895.08H1426V894.5H1429V895.08H1431V894.5H1434V895.08H1438V894.5H1439V894H1442V894.5H1450V894H1451V894.5H1455V895.08H1456V894.5H1458V895.08H1481V894.5H1482V894H1485V894.5H1487V895.08H1490V893H1491V893.5H1492V894.5H1493V894H1494V894.5H1495V894H1496V894.5H1497V895.08H1498V894.5H1499V895.08H1506V894.5H1509V895.08H1516V894.5H1518V895.08H1522V894.5H1523V895.08H1527V894.5H1529V895.08H1533V894.5H1536H1536V896.5H1533V895.92H1529V896.5H1527V895.92H1523V896.5H1522V895.92H1518V896.5H1516V895.92H1509V896.5H1506V895.92H1499V896.5H1498V895.92H1497V896.5H1496V897H1495V896.5H1494V897H1493V896.5H1492V897.5H1491V898H1490V895.92H1487V896.5H1485V897H1482V896.5H1481V895.92H1458V896.5H1456V895.92H1455V896.5H1451V897H1450V896.5H1442V897H1439V896.5H1438V895.92H1434V896.5H1431V895.92H1429V896.5H1426V895.92H1414V896.5H1409V895.92H1400V896.5H1399V897H1395V896.5H1394V895.92H1381V897H1380V896.5H1379V897H1377V895.92H1371V896.5H1369V897H1368V896.5H1366V895.92H1364V896.5H1363V895.92H1361V896.5H1358V895.92H1347V896.5H1346V895.92H1335V896.5H1334V897H1330V896.5H1327V895.92H1320V896.5H1315V895.92H1312V896.5H1311V895.92H1305V896.5H1304V897H1303V896.5H1300V897H1298V896.5H1296V895.92H1281V897H1280V895.92H1278V896.5H1273V895.92H1271V896.5H1270V897H1268V896.5H1267V895.92H1262V896.5H1261V897H1259V896.5H1258V895.92H1254V896.5H1252V895.92H1245V896.5H1244V895.92H1241V896.5H1239V895.92H1238V896.5H1236V897H1235V896.5H1234V895.92H1228V896.5H1223V897H1221V896.5H1220V895.92H1206V896.5H1205V897H1201V896.5H1195V895.92H1190V896.5H1189V895.92H1188V896.5H1187V897H1186V896.5H1184V897H1182V896.5H1181V895.92H1179V897H1175V896.5H1174V895.92H1162V896.5H1161V895.92H1160V896.5H1159V897H1155V896.5H1154V895.92H1144V896.5H1143V897H1141V896.5H1139V897H1137V896.5H1136V895.92H1124V896.5H1123V897.5H1122V896.5H1121V897.5H1120V895.92H1111V896.5H1110V897H1109V896.5H1106V897H1104V896.5H1102V897H1099V896.5H1097V897H1096V896.5H1094V897H1090V896.5H1084V897H1081V895.92H1068V896.5H1063V895.92H1059V896.5H1058V897H1054V896.5H1053V895.92H1036V896.5H1035V895.92H1026V896.5H1024V895.92H1023V896.5H1020V895.92H1019V896.5H1018V897H1013V896.5H1010V895.92H1001V897H1000V895.92H995V897H991V896.5H986V895.92H985V896.5H983V895.92H976V896.5H975V897H973V896.5H972V895.92H967V896.5H965V895.92H941V896.5H940V897H936V895.92H932V897H930V896.5H927V895.92H922V896.5H916V895.92H906V897H905V895.92H903V896.5H901V895.92H896V896.5H895V897H892V896.5H890V897H888V896.5H886V897H882V896.5H881V897H878V895.92H877V896.5H873V895.92H871V896.5H868V895.92H858V897.5H857V895.92H856V897.5H855V895.92H854V897H851V896.5H846V895.92H839V896.5H836V895.92H832V896.5H831V897H827V895.92H825V896.5H824V897H821V896.5H806V895.92H802V896.5H799V895.92H782V896.5H778V895.92H773V897H770V895.92H765V897H764V897.5H763V897H762V895.92H757V897H753V897.5H751V897H749V896.5H746V897H744V895.92H741V897H738V897.5H737V897H736V895.92H735V896.5H732V895.92H731V896.5H728V895.92H720V896.5H715V897H714V896.5H713V895.92H696V896.5H695V897H692V895.92H685V896.5H684V895.92H681V898H680V897H677V895.92H676V896.5H674V895.92H673V896.5H666V895.92H661V896.5H658V897H655V895.92H643V897H640V896.5H639V895.92H634V896.5H631V897H626V896.5H624V895.92H622V896.5H618V897H617V897.5H613V897H612V896.5H611V897H610V896.5H609V897H607V898.5H606V897H605V898.5H604V895.92H601V896.5H598V895.92H591V896.5H590V897H589V896.5H588V895.92H582V896.5H579V895.92H575V897H574V897.5H573V897H572V896.5H568V895.92H559V898H558V895.92H557V896.5H554V895.92H547V897H546V898H545V897.5H544V897H543V896.5H538V897.5H537V899H536V898H535V899H534V895.92H529V897H528V897.5H526V898H525V897.5H524V897H523V896.5H522V897H520V896.5H519V895.92H506V898H505V895.92H504V898.5H503V895.92H498V897H497V897.5H496V897H494V895.92H489V899H488V895.92H479V896.5H478V895.92H470V898.5H469V895.92H463V897H462V897.5H461V897H459V896.5H457V895.92H451V897.5H450V898H448V897.5H447V897H445V897.5H442V897H440V897.5H438V895.92H437V896.5H432V897.5H431V898H430V897.5H429V896.5H425V895.92H424V896.5H420V895.92H417V897H416V896.5H415V897H414V897.5H413V897H412V895.92H404V896.5H402V897.5H401V898H400V897.5H399V899H398V897H397V896.5H396V895.92H391V896.5H389V897H386V896.5H384V897H382V899H381V897H380V896.5H378V897H376V896.5H369V897H368V897.5H365V897H364V897.5H363V896.5H362V897H357V899H356V897.5H354V899.5H353V897.5H351V898H348V899.5H347V897.5H346V899H345V898H344V897.5H343V897H338V896.5H335V897H333V896.5H332V895.92H330V896.5H329V895.92H328V898H326V897.5H324V898H323V897.5H322V895.92H320V896.5H318V895.92H317V897.5H315V898H313V897.5H312V897H311V897.5H310V898H309V898.5H308V898H307V895.92H306V900.5H305V896.5H304V895.92H301V896.5H299V897H293V897.5H292V897H291V897.5H290V898.5H289V898H288V898.5H287V898H286V897.5H285V895.92H284V896.5H281V897H279V896.5H278V898H274V898.5H273V898H272V895.92H269V899H268V895.92H266V896.5H261V895.92H260V896.5H257V897H256V896.5H255V897.5H254V898.5H253V898H252V898.5H251V898H250V897.5H249V898.5H248V898H247V895.92H246V899H245V895.92H234V897H233V898H231V897.5H230V895.92H224V897.5H223V898H222V896.5H221V897H220V896.5H219V897H217V897.5H215V897H214V898H213V898.5H212V898H211V895.92H207V896.5H202V897H201V897.5H199V897H198V898.5H196V899H194V898H193V897H191V897.5H188V897H187V897.5H186V898.5H185V898H182V899H181V898.5H179V899H178V898H177V897H175V897.5H174V897H171V898H169V898.5H168V899H167V898H166V897.5H165V898H161V897.5H160V898H159V899.5H158V898.5H157V898H155V897H154V897.5H153V896.5H151V897.5H150V898.5H149V898H147V897H146V897.5H145V896.5H143V898H142V899H141V898.5H139V897H138V897.5H137V898H135V898.5H134V898H133V898.5H132V897.5H130V898.5H129V898H128V897.5H126V902H125V897.5H122V898H121V897.5H119V898H118V898.5H117V899H116V898H114V898.5H113V899H111V898.5H109V899H108V898.5H106V898H105V898.5H104V899H103V898.5H102V898H101V897.5H100V898H99V898.5H98V897.5H96V898H94V898.5H92V900.5H91V898H90V897.5H89V898H87V900H86V897.5H84V898H83V897.5H80V897H79V897.5H78V898H77V897.5H76V898.5H75V899H74V899.5H73V898.5H72V897H70V900H69V897.5H67V897H65V897.5H64V898H62V897H61V895.92H49V897.5H48V901.5H47V898.5H46V898H45V897.5H44V898H42V898.5H41V898H39V898.5H36V899.5H35V896.5H34V897H33V897.5H31V897H29V898H28V898.5H27V899H26V898.5H24V899H23V898H22V898.5H20V899.5H19V899H18V898H17V895.92H12V896.5H10V898.5H7V896.5H3Z" fill="#5a9a8d"/><use href="#wv" y="66"/></svg>
<div class="a" style="left:1519px;top:875px;width:3px;height:105px;background:rgba(255,255,255,0.06);border-left:0.5px solid rgba(255,255,255,0.12);border-right:0.5px solid rgba(255,255,255,0.12);box-sizing:border-box"></div>
<div class="a" style="left:1515px;top:921px;width:11px;height:11px;border-radius:50%;background:rgba(120,120,120,0.45);border:0.5px solid rgba(150,150,150,0.5);box-sizing:border-box"></div>
<svg style="left:0;top:0" width="5" height="5"><path d="M0 0 H4.5 A4.5 4.5 0 0 0 0 4.5Z" fill="#000"/></svg>
<svg style="left:1531px;top:0" width="5" height="5"><path d="M5 0 H0.5 A4.5 4.5 0 0 1 5 4.5Z" fill="#000"/></svg>
<svg style="left:0;top:990px" width="4" height="4"><path d="M0 0 A4 4 0 0 0 4 4 H0Z" fill="#0a0a0a"/></svg>
</body></html>
